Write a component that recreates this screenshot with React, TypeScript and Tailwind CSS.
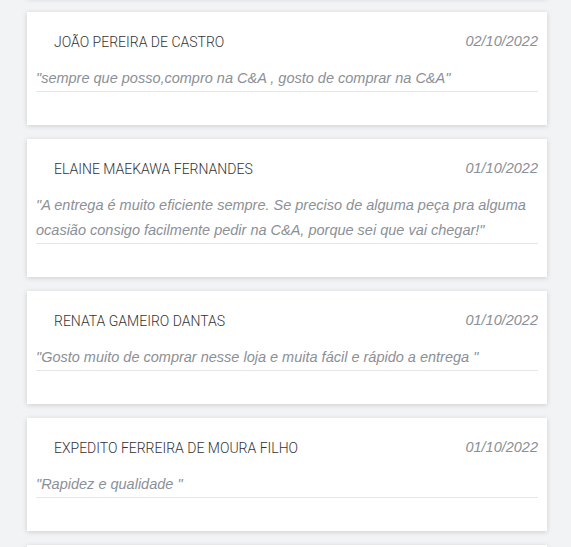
import React from 'react';

interface Review {
  name: string;
  date: string;
  text: string;
}

const reviews: Review[] = [
  { name: 'JOÃO PEREIRA DE CASTRO', date: '02/10/2022', text: '"sempre que posso,compro na C&A , gosto de comprar na C&A"' },
  {
    name: 'ELAINE MAEKAWA FERNANDES',
    date: '01/10/2022',
    text: '"A entrega é muito eficiente sempre. Se preciso de alguma peça pra alguma ocasião consigo facilmente pedir na C&A, porque sei que vai chegar!"',
  },
  { name: 'RENATA GAMEIRO DANTAS', date: '01/10/2022', text: '"Gosto muito de comprar nesse loja e muita fácil e rápido a entrega "' },
  { name: 'EXPEDITO FERREIRA DE MOURA FILHO', date: '01/10/2022', text: '"Rapidez e qualidade "' },
];

const ReviewCard: React.FC<{ review?: Review }> = ({ review }) => (
  <div className="bg-white shadow-[0_1px_5px_rgba(0,0,0,0.16)] px-[9px] pt-[20px] pb-[33px]">
    <div className="flex items-center justify-between h-[20px]">
      <span className="pl-[18px] text-[14px] text-[#333] font-light font-[family-name:Roboto,sans-serif]">{review?.name}</span>
      <span className="text-[14.5px] italic text-[#8b9096] font-[family-name:'Liberation_Sans',Arial,sans-serif]">{review?.date}</span>
    </div>
    <p className="mt-[14px] leading-[25px] min-h-[26px] text-[14.5px] italic text-[#8b9096] border-b border-[#e6e6e6] font-[family-name:'Liberation_Sans',Arial,sans-serif]">
      {review?.text}
    </p>
  </div>
);

export default function App() {
  return (
    <div className="h-screen bg-[#f2f3f5] overflow-hidden">
      <div className="flex flex-col gap-[14px] mt-[-115px] ml-[27px] w-[520px]">
        <ReviewCard />
        {reviews.map((r) => (
          <ReviewCard key={r.name} review={r} />
        ))}
        <ReviewCard />
      </div>
    </div>
  );
}
